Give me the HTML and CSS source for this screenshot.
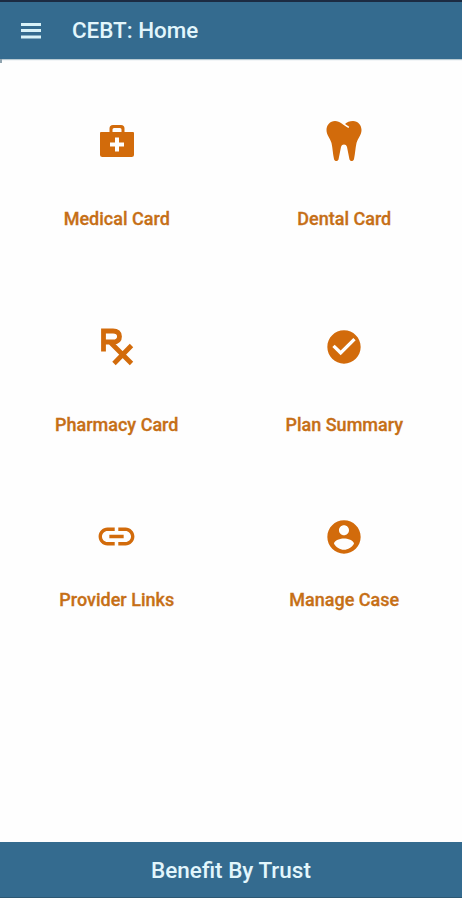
FILE: index.html
```html
<!DOCTYPE html>
<html lang="en">
<head>
  <meta charset="UTF-8">
  <meta name="viewport" content="width=device-width, initial-scale=1.0">
  <title>CEBT: Home</title>
  <link rel="stylesheet" href="styles.css">
</head>
<body>
  <header class="app-bar">
    <button class="menu-button" type="button" aria-label="Menu">
      <svg width="20" height="16" viewBox="0 0 20 16"><path d="M0 0h20v3H0zM0 6h20v3H0zM0 12.500h20v3H0z"/></svg>
    </button>
    <h1>CEBT: Home</h1>
  </header>

  <main class="tiles">
    <a class="tile">
      <span class="tile-icon">
        <svg width="36" height="34" viewBox="0 0 36 34">
          <path fill-rule="evenodd" d="M10.500 8V4.500Q10.500 1 14 1h8q3.500 0 3.500 3.500V8H34q1 0 1 1v21.500q0 2.500-2.500 2.500h-29Q1 33 1 30.500V9q0-1 1-1zM13.500 8h9V5.500Q22.500 4 21 4h-6q-1.500 0-1.500 1.500zM16 13.500v5h-5v4h5v5h4v-5h5v-4h-5v-5z"/>
        </svg>
      </span>
      <span class="tile-label">Medical Card</span>
    </a>
    <a class="tile">
      <span class="tile-icon">
        <svg width="36" height="42" viewBox="0 0 36 42">
          <path d="M9 1C4 1 .5 5 .5 10c0 5 3.500 8 5 13 1.200 5 1.300 11 2.500 16 .7 2.800 4 2.800 4.600 0l2.400-12c.7-3.300 5.300-3.300 6 0l2.400 12c.6 2.800 3.900 2.800 4.600 0 1.200-5 1.300-11 2.500-16 1.500-5 5-8 5-13 0-5-3.500-9-8.500-9-3.500 0-6 1.300-8 3l4.200 2.800-.7 1.100C17.500 5.500 14 1 9 1z"/>
        </svg>
      </span>
      <span class="tile-label">Dental Card</span>
    </a>
    <a class="tile">
      <span class="tile-icon">
        <svg class="rx" width="34" height="38" viewBox="0 0 34 38">
          <path d="M3.500 23.500V3H13q6.500 0 6.500 5.500T13 14H3.500M10 14l21.500 21.500M31.500 17.500L14 35.500"/>
        </svg>
      </span>
      <span class="tile-label">Pharmacy Card</span>
    </a>
    <a class="tile">
      <span class="tile-icon">
        <svg width="40" height="40" viewBox="0 0 24 24"><path d="M12 2C6.480 2 2 6.480 2 12s4.480 10 10 10 10-4.480 10-10S17.520 2 12 2zm-2 15l-5-5 1.410-1.410L10 14.170l7.590-7.590L19 8l-9 9z"/></svg>
      </span>
      <span class="tile-label">Plan Summary</span>
    </a>
    <a class="tile tile-short">
      <span class="tile-icon">
        <svg width="43" height="43" viewBox="0 0 24 24"><path d="M3.900 12c0-1.710 1.390-3.100 3.100-3.100h4V7H7c-2.760 0-5 2.240-5 5s2.240 5 5 5h4v-1.900H7c-1.710 0-3.100-1.390-3.100-3.100zM8 13h8v-2H8v2zm9-6h-4v1.900h4c1.710 0 3.100 1.390 3.100 3.100s-1.390 3.100-3.100 3.100h-4V17h4c2.760 0 5-2.240 5-5s-2.240-5-5-5z"/></svg>
      </span>
      <span class="tile-label">Provider Links</span>
    </a>
    <a class="tile tile-short">
      <span class="tile-icon">
        <svg width="40" height="40" viewBox="0 0 24 24"><path d="M12 2C6.480 2 2 6.480 2 12s4.480 10 10 10 10-4.480 10-10S17.520 2 12 2zm0 3c1.660 0 3 1.340 3 3s-1.340 3-3 3-3-1.340-3-3 1.340-3 3-3zm0 14.600c-2.500 0-4.710-1.480-6-3.620.03-1.990 4-3.080 6-3.080 1.990 0 5.970 1.090 6 3.080-1.290 2.140-3.500 3.620-6 3.620z"/></svg>
      </span>
      <span class="tile-label">Manage Case</span>
    </a>
  </main>

  <footer class="bottom-bar">Benefit By Trust</footer>
</body>
</html>
```

FILE: styles.css
```css
* { box-sizing: border-box; }
body {
  display: flex;
  flex-direction: column;
  height: 900px;
  margin: 0;
  padding-bottom: 2px;
  background: #fefefe;
  font-family: Roboto, sans-serif;
  font-weight: 500;
}
.app-bar {
  display: flex;
  align-items: center;
  height: 59px;
  padding-left: 21px;
  border-top: 2px solid #1c2b42;
  background: #346b8f;
  box-shadow: 0 1px 1px #b9cbd3;
  color: #e2f6fc;
}
.app-bar h1 { margin: 0 0 2px 31px; font-size: 22.4px; font-weight: 500; line-height: 28px; }
.menu-button { display: flex; padding: 0; border: 0; background: none; }
.menu-button svg { fill: #d8f2f8; }
.tiles {
  flex: 1;
  display: grid;
  grid-template-columns: 1fr 1fr;
  grid-template-rows: 206px 208px auto;
  padding: 22px 4px 0 3px;
  align-content: start;
}
/* stub of the drawer edge under the app bar */
.tiles::before {
  content: "";
  position: absolute;
  top: 59px;
  left: 0;
  width: 2px;
  height: 4px;
  background: #8fa3af;
}
.tile { display: flex; flex-direction: column; align-items: center; color: #c66f16; }
.tile-icon { display: flex; align-items: center; justify-content: center; height: 120px; }
.tile-icon svg { fill: #d26b0b; }
.tile-icon .rx { fill: none; stroke: #d26b0b; stroke-width: 4.8; }
.tile-label {
  margin-top: 6px;
  font-size: 18px;
  line-height: 24px;
  -webkit-text-stroke: 0.3px;
}
.tile-short .tile-icon { height: 83px; }
.tile-short .tile-label { margin-top: 10px; }
.bottom-bar {
  height: 56px;
  background: #346b8f;
  border-bottom: 1px solid #2c5873;
  color: #e2f6fc;
  font-size: 22.5px;
  line-height: 57px;
  text-align: center;
}
```
